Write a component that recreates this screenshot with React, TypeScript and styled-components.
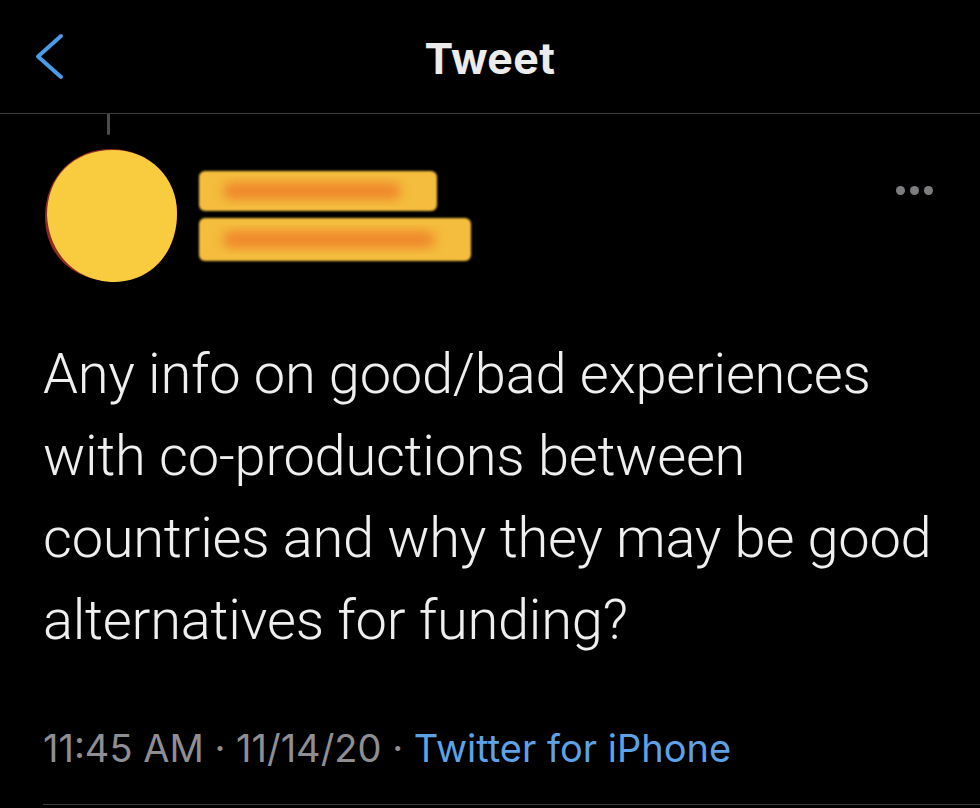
import React from "react";
import styled, { createGlobalStyle } from "styled-components";

const GlobalStyle = createGlobalStyle`
  html, body {
    margin: 0;
    padding: 0;
    background: #000000;
  }
  body {
    font-family: Inter, "Noto Sans", "Liberation Sans", sans-serif;
    color: #ededed;
    -webkit-font-smoothing: antialiased;
  }
`;

const Screen = styled.div`
  width: 980px;
  height: 808px;
  background: #000;
  overflow: hidden;
  display: flex;
  flex-direction: column;
`;

const NavBar = styled.header`
  height: 114px;
  box-sizing: border-box;
  border-bottom: 1px solid #3a3a3a;
  display: grid;
  grid-template-columns: 200px 1fr 200px;
  align-items: center;
`;

const BackButton = styled.button`
  background: none;
  border: none;
  padding: 0;
  margin: 0 0 0 34px;
  width: 32px;
  height: 48px;
  display: flex;
  align-items: center;
  justify-content: flex-start;
  cursor: pointer;
  justify-self: start;
`;

const Title = styled.h1`
  margin: 0;
  text-align: center;
  font-family: Inter, "Liberation Sans", sans-serif;
  font-weight: 700;
  font-size: 43px;
  line-height: 42px;
  letter-spacing: 0.4px;
  color: #ececec;
  transform: translateY(1px);
`;

const Tweet = styled.article`
  display: flex;
  flex-direction: column;
  padding: 0 0 0 43px;
`;

const ThreadLine = styled.div`
  width: 3px;
  height: 21px;
  margin-left: 64px;
  background: #4b4b4b;
  border-radius: 0 0 2px 2px;
`;

const AuthorRow = styled.div`
  display: flex;
  align-items: flex-start;
  margin-top: 12px;
  padding-right: 47px;
  height: 136px;
`;

const Avatar = styled.div`
  width: 136px;
  height: 136px;
  flex: none;
`;

const NameColumn = styled.div`
  display: flex;
  flex-direction: column;
  gap: 3px;
  margin-left: 18px;
  margin-top: 22px;
  flex: 1;
`;

const MoreButton = styled.div`
  display: flex;
  gap: 5px;
  margin-top: 39px;
`;

const Dot = styled.span`
  width: 9px;
  height: 9px;
  border-radius: 50%;
  background: #7d7d80;
`;

const Body = styled.p`
  margin: 50px 0 0 0;
  padding-right: 20px;
  font-family: Roboto, Inter, "Noto Sans", sans-serif;
  font-weight: 300;
  font-size: 56px;
  line-height: 82px;
  letter-spacing: -0.25px;
  color: #efefef;
`;

const Meta = styled.div`
  margin-top: 62px;
  padding-bottom: 31px;
  border-bottom: 1px solid #3a3a3a;
  font-family: Inter, "Noto Sans", sans-serif;
  font-weight: 400;
  font-size: 38px;
  line-height: 50px;
  letter-spacing: 0px;
  color: #8e8e93;
  white-space: nowrap;
`;

const Source = styled.span`
  color: #5ea2e6;
`;

const Redaction: React.FC<{ width: number; height: number; id: string }> = ({
  width,
  height,
  id,
}) => (
  <svg width={width} height={height} viewBox={`0 0 ${width} ${height}`}>
    <defs>
      <filter id={`${id}-blur`} x="-10%" y="-40%" width="120%" height="180%">
        <feGaussianBlur stdDeviation="6" />
      </filter>
      <filter id={`${id}-soft`} x="-5%" y="-20%" width="110%" height="140%">
        <feGaussianBlur stdDeviation="1.2" />
      </filter>
    </defs>
    <rect
      x="2"
      y="2"
      width={width - 4}
      height={height - 4}
      rx="6"
      fill="#f4bd3c"
      filter={`url(#${id}-soft)`}
    />
    <rect
      x="26"
      y={height / 2 - 8}
      width={width - 64}
      height="16"
      rx="8"
      fill="#ee7428"
      opacity="0.8"
      filter={`url(#${id}-blur)`}
    />
  </svg>
);

const ChevronLeft = () => (
  <svg width="32" height="48" viewBox="0 0 32 48" fill="none">
    <path
      d="M27 3 L4 23.5 L27 44"
      stroke="#4b9be8"
      strokeWidth="4"
      strokeLinecap="round"
      strokeLinejoin="round"
    />
  </svg>
);

const AvatarBlob = () => (
  <svg width="136" height="136" viewBox="0 0 136 136">
    <path
      d="M2 70 C2 30 30 2 68 2 C104 2 134 30 134 68 C134 106 108 134 70 134 C30 134 2 108 2 70 Z"
      fill="#8f2b1f"
    />
    <path
      d="M4 68 C4 30 30 3 70 3 C106 3 134 30 134 66 C134 104 110 134 72 135 C34 135 6 108 4 68 Z"
      fill="#f9cb3f"
    />
  </svg>
);

export default function App() {
  return (
    <>
      <GlobalStyle />
      <Screen>
        <NavBar>
          <BackButton aria-label="Back">
            <ChevronLeft />
          </BackButton>
          <Title>Tweet</Title>
          <span />
        </NavBar>
        <Tweet>
          <ThreadLine />
          <AuthorRow>
            <Avatar>
              <AvatarBlob />
            </Avatar>
            <NameColumn>
              <Redaction id="name" width={242} height={44} />
              <Redaction id="handle" width={276} height={47} />
            </NameColumn>
            <MoreButton>
              <Dot />
              <Dot />
              <Dot />
            </MoreButton>
          </AuthorRow>
          <Body>
            Any info on good/bad experiences with co-productions between
            countries and why they may be good alternatives for funding?
          </Body>
          <Meta>
            11:45 AM · 11/14/20 · <Source>Twitter for iPhone</Source>
          </Meta>
        </Tweet>
      </Screen>
    </>
  );
}
